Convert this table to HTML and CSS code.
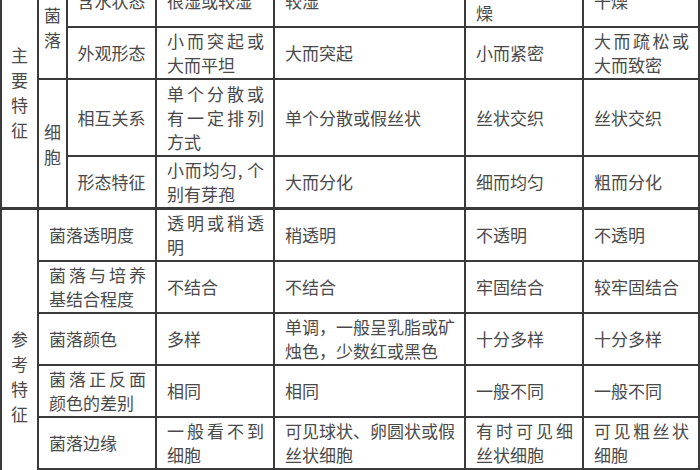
FILE: index.html
```html
<!DOCTYPE html>
<html lang="zh-CN">
<head>
<meta charset="utf-8">
<title>菌落特征比较</title>
<link rel="stylesheet" href="styles.css">
</head>
<body>
<table class="sheet">
  <colgroup>
    <col class="c-group">
    <col class="c-sub">
    <col class="c-label">
    <col class="c-d">
    <col class="c-e">
    <col class="c-f">
    <col class="c-g">
  </colgroup>
  <tbody>
    <tr class="row">
      <td class="vert" rowspan="4">主要特征</td>
      <td class="sub" rowspan="2">菌落</td>
      <td class="label">含水状态</td>
      <td>很湿或较湿</td>
      <td>较湿</td>
      <td>干燥或较干燥</td>
      <td>干燥</td>
    </tr>
    <tr class="row">
      <td class="label">外观形态</td>
      <td>小而突起或大而平坦</td>
      <td>大而突起</td>
      <td>小而紧密</td>
      <td>大而疏松或大而致密</td>
    </tr>
    <tr class="row-tall">
      <td class="sub" rowspan="2">细胞</td>
      <td class="label">相互关系</td>
      <td>单个分散或有一定排列方式</td>
      <td>单个分散或假丝状</td>
      <td>丝状交织</td>
      <td>丝状交织</td>
    </tr>
    <tr class="row">
      <td class="label">形态特征</td>
      <td>小而均匀, 个别有芽孢</td>
      <td>大而分化</td>
      <td>细而均匀</td>
      <td>粗而分化</td>
    </tr>
    <tr class="row group-top">
      <td class="vert" rowspan="6">参考特征</td>
      <td class="wide" colspan="2">菌落透明度</td>
      <td>透明或稍透明</td>
      <td>稍透明</td>
      <td>不透明</td>
      <td>不透明</td>
    </tr>
    <tr class="row">
      <td class="wide" colspan="2">菌落与培养基结合程度</td>
      <td>不结合</td>
      <td>不结合</td>
      <td>牢固结合</td>
      <td>较牢固结合</td>
    </tr>
    <tr class="row">
      <td class="wide" colspan="2">菌落颜色</td>
      <td>多样</td>
      <td>单调，一般呈乳脂或矿烛色，少数红或黑色</td>
      <td>十分多样</td>
      <td>十分多样</td>
    </tr>
    <tr class="row">
      <td class="wide" colspan="2">菌落正反面颜色的差别</td>
      <td>相同</td>
      <td>相同</td>
      <td>一般不同</td>
      <td>一般不同</td>
    </tr>
    <tr class="row">
      <td class="wide" colspan="2">菌落边缘</td>
      <td>一般看不到细胞</td>
      <td>可见球状、卵圆状或假丝状细胞</td>
      <td>有时可见细丝状细胞</td>
      <td>可见粗丝状细胞</td>
    </tr>
    <tr class="row-end">
      <td class="wide" colspan="2">细胞生长速度</td>
      <td>一般很快</td>
      <td>较快</td>
      <td>慢</td>
      <td>一般较快</td>
    </tr>
  </tbody>
</table>
</body>
</html>
```

FILE: styles.css
```css
html, body {
  margin: 0;
  padding: 0;
  background: #ffffff;
  overflow: hidden;
}

.sheet {
  border-collapse: collapse;
  table-layout: fixed;
  width: 698px;
  margin-top: -26px;
  font-family: "Noto Sans CJK SC", "Noto Sans CJK TC", sans-serif;
  font-size: 17px;
  line-height: 24px;
  color: #4a4a4a;
}

.c-group { width: 37px; }
.c-sub { width: 29px; }
.c-label { width: 89px; }
.c-d { width: 118px; }
.c-e { width: 191px; }
.c-f { width: 118px; }
.c-g { width: 116px; }

.sheet td {
  border: 2px solid #3a3a3a;
  padding: 1px 9px 1px 10px;
  vertical-align: middle;
  text-align: justify;
  overflow: hidden;
}

.row { height: 52px; }
.row-tall { height: 77px; }
.row-end { height: 74px; }

.group-top td { border-top-width: 3px; }

.sheet td.vert {
  text-align: center;
  padding: 0 8px;
  line-height: 25px;
}

.sheet td.sub {
  text-align: center;
  padding: 0 5px;
  line-height: 25px;
}

.sheet td.label {
  text-align: center;
  padding: 1px 4px;
}

.sheet td.wide {
  padding: 1px 9px 1px 10px;
}
```
